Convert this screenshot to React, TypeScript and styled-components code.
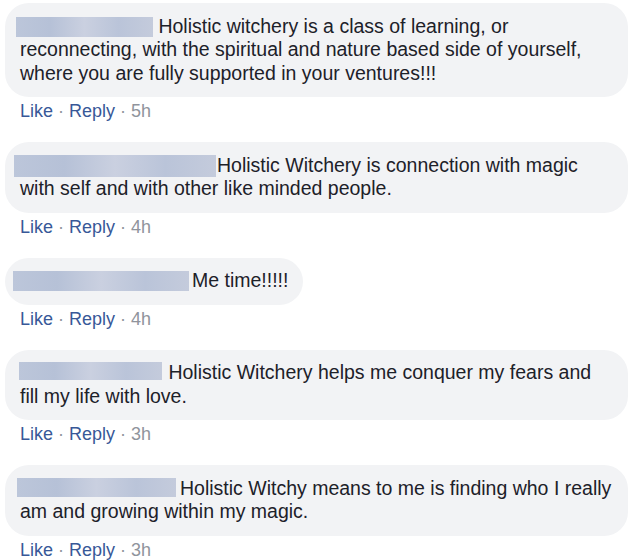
import React from "react";
import styled, { createGlobalStyle } from "styled-components";

const GlobalStyle = createGlobalStyle`
  html, body {
    margin: 0;
    padding: 0;
    background: #ffffff;
  }
  body {
    font-family: "Liberation Sans", Arial, Helvetica, sans-serif;
  }
`;

type Comment = {
  blur: { width: number; height: number; left: number; right: number; drop: number };
  spaced: boolean;
  text: string;
  time: string;
};

const comments: Comment[] = [
  {
    blur: { width: 137, height: 20, left: -4, right: 0, drop: 4 },
    spaced: true,
    text: "Holistic witchery is a class of learning, or reconnecting, with the spiritual and nature based side of yourself, where you are fully supported in your ventures!!!",
    time: "5h",
  },
  {
    blur: { width: 202, height: 22, left: -6, right: 1, drop: 5 },
    spaced: false,
    text: "Holistic Witchery is connection with magic with self and with other like minded people.",
    time: "4h",
  },
  {
    blur: { width: 176, height: 20, left: -7, right: 3, drop: 4 },
    spaced: false,
    text: "Me time!!!!!",
    time: "4h",
  },
  {
    blur: { width: 143, height: 18, left: -1, right: 1, drop: 1 },
    spaced: true,
    text: "Holistic Witchery helps me conquer my fears and fill my life with love.",
    time: "3h",
  },
  {
    blur: { width: 159, height: 19, left: -3, right: 4, drop: 2 },
    spaced: false,
    text: "Holistic Witchy means to me is finding who I really am and growing within my magic.",
    time: "3h",
  },
];

export default function App() {
  return (
    <>
      <GlobalStyle />
      <Thread>
        {comments.map((c, i) => (
          <CommentBlock key={i}>
            <Bubble>
              <NameBlur
                $width={c.blur.width}
                $height={c.blur.height}
                $left={c.blur.left}
                $right={c.blur.right}
                $drop={c.blur.drop}
              />
              {c.spaced ? " " : ""}
              {c.text}
            </Bubble>
            <Actions>
              <ActionLink>Like</ActionLink>
              <Dot>·</Dot>
              <ActionLink>Reply</ActionLink>
              <Dot>·</Dot>
              <Time>{c.time}</Time>
            </Actions>
          </CommentBlock>
        ))}
      </Thread>
    </>
  );
}

const Thread = styled.div`
  display: flex;
  flex-direction: column;
  align-items: flex-start;
  padding: 3px 0 0 5px;
  width: 623px;
`;

const CommentBlock = styled.div`
  display: flex;
  flex-direction: column;
  align-items: flex-start;
  margin-bottom: 20px;
`;

const Bubble = styled.div`
  display: inline-block;
  box-sizing: border-box;
  max-width: 623px;
  padding: 11.75px 15px;
  border-radius: 24px;
  background: #f2f3f5;
  color: #1d2129;
  font-size: 19.5px;
  line-height: 23.5px;
`;

const NameBlur = styled.span<{
  $width: number;
  $height: number;
  $left: number;
  $right: number;
  $drop: number;
}>`
  display: inline-block;
  width: ${({ $width }) => $width}px;
  height: ${({ $height }) => $height}px;
  margin-left: ${({ $left }) => $left}px;
  margin-right: ${({ $right }) => $right}px;
  vertical-align: ${({ $drop }) => -$drop}px;
  background: linear-gradient(
    90deg,
    #bcc6da 0%,
    #b6c1d7 25%,
    #cad0e0 50%,
    #bac4d9 75%,
    #c4cbdc 100%
  );
`;

const Actions = styled.div`
  display: flex;
  align-items: baseline;
  gap: 5px;
  height: 22px;
  padding: 3px 0 0 15px;
  font-size: 18px;
  line-height: 22px;
`;

const ActionLink = styled.span`
  color: #385898;
`;

const Dot = styled.span`
  color: #90949c;
`;

const Time = styled.span`
  color: #90949c;
`;
